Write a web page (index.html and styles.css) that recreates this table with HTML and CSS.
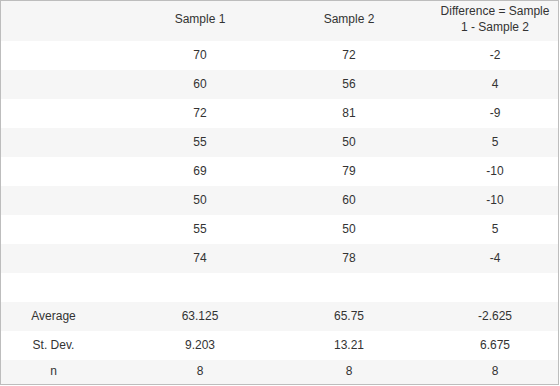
FILE: index.html
```html
<!DOCTYPE html>
<html>
<head>
<meta charset="utf-8">
<link rel="stylesheet" href="styles.css">
</head>
<body>
<table class="stats">
  <colgroup>
    <col class="c1"><col class="c2"><col class="c3"><col class="c4">
  </colgroup>
  <thead>
    <tr class="head">
      <th></th>
      <th>Sample 1</th>
      <th>Sample 2</th>
      <th class="diff">Difference = Sample 1 - Sample 2</th>
    </tr>
  </thead>
  <tbody>
    <tr><td></td><td>70</td><td>72</td><td class="diff">-2</td></tr>
    <tr class="alt"><td></td><td>60</td><td>56</td><td class="diff">4</td></tr>
    <tr><td></td><td>72</td><td>81</td><td class="diff">-9</td></tr>
    <tr class="alt"><td></td><td>55</td><td>50</td><td class="diff">5</td></tr>
    <tr><td></td><td>69</td><td>79</td><td class="diff">-10</td></tr>
    <tr class="alt"><td></td><td>50</td><td>60</td><td class="diff">-10</td></tr>
    <tr><td></td><td>55</td><td>50</td><td class="diff">5</td></tr>
    <tr class="alt"><td></td><td>74</td><td>78</td><td class="diff">-4</td></tr>
    <tr><td></td><td></td><td></td><td class="diff"></td></tr>
    <tr class="alt"><td>Average</td><td>63.125</td><td>65.75</td><td class="diff">-2.625</td></tr>
    <tr><td>St. Dev.</td><td>9.203</td><td>13.21</td><td class="diff">6.675</td></tr>
    <tr class="alt last"><td>n</td><td>8</td><td>8</td><td class="diff">8</td></tr>
  </tbody>
</table>
</body>
</html>
```
FILE: styles.css
```css
html, body {
  margin: 0;
  padding: 0;
  background: #ffffff;
}

.stats {
  width: 559px;
  table-layout: fixed;
  border-collapse: separate;
  border-spacing: 0;
  border: 1px solid #bdbdbd;
  font-family: "Liberation Sans", Arial, sans-serif;
  font-size: 12px;
  color: #333333;
}

.c1 { width: 105px; }
.c2 { width: 188px; }
.c3 { width: 110px; }
.c4 { width: 154px; }

.stats th,
.stats td {
  padding: 0;
  text-align: center;
  vertical-align: middle;
  font-weight: normal;
  line-height: 15px;
  height: 29px;
}

.stats .head th {
  background: #f6f6f6;
  height: 37px;
  padding-bottom: 3px;
  line-height: 15.5px;
}

.stats th.diff,
.stats td.diff {
  padding-left: 36px;
  padding-right: 8px;
}

.stats tr.alt td {
  background: #f6f6f6;
}

.stats tr.last td {
  height: 23px;
  padding-bottom: 1px;
}
```
